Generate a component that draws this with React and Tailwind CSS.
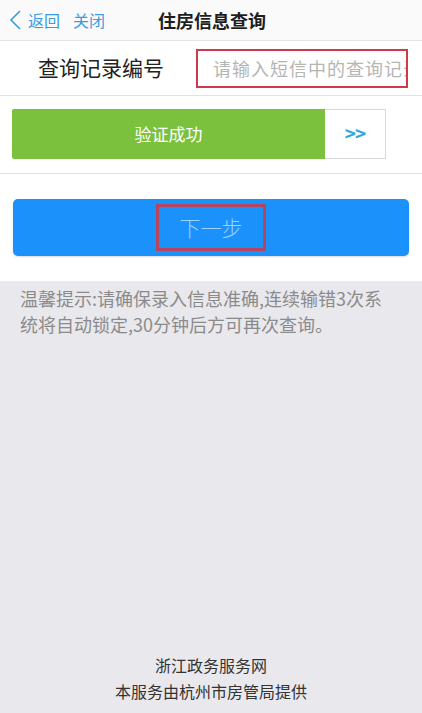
import React from 'react'

const font = { fontFamily: '"Noto Sans CJK SC", "Noto Sans", sans-serif' }

export default function App() {
  return (
    <div className="flex h-[713px] w-[422px] flex-col bg-[#e9e8ed]" style={font}>
      <div className="relative flex h-[41px] items-center border-b border-[#e4e4e4] bg-[#fafafa]">
        <div className="flex items-center pl-[9px] text-[16px] text-[#3b9be0]">
          <svg className="mr-[6px] h-[22px] w-[13px]" viewBox="0 0 13 22" fill="none" stroke="#3b9be0" strokeWidth="1.6">
            <path d="M11 2 L2 11 L11 20" />
          </svg>
          <span>返回</span>
          <span className="ml-[13px]">关闭</span>
        </div>
        <div className="absolute left-0 right-0 top-0 flex h-[40px] items-center justify-center pl-[2px] text-[18px] font-bold text-[#1e1e1e]">
          住房信息查询
        </div>
      </div>

      <div className="flex h-[55px] items-center border-b border-[#e2e2e2] bg-white">
        <div className="w-[196px] pl-[38px] text-[21px] text-[#222]">查询记录编号</div>
        <div className="flex h-[39px] w-[212px] items-center overflow-hidden whitespace-nowrap border-2 border-[#cf3a4a] pl-[15px] text-[18px] tracking-[1px] text-[#b5b5b5]">
          请输入短信中的查询记录编号
        </div>
      </div>

      <div className="flex h-[78px] items-center border-b border-[#e2e2e2] bg-white px-[12px] pb-[2px]">
        <div className="flex h-[50px] w-[313px] items-center justify-center rounded-l-[2px] bg-[#7cc13e] text-[17px] text-white">
          验证成功
        </div>
        <div className="flex h-[50px] w-[61px] items-center justify-center border border-l-0 border-[#d8d8d8] bg-white text-[19px] font-bold tracking-[-1px] text-[#33a6e0]">
          &gt;&gt;
        </div>
      </div>

      <div className="flex h-[107px] items-start bg-white px-[13px] pt-[25px]">
        <div className="flex h-[57px] w-full items-center justify-center rounded-[5px] bg-[#1a91fb] shadow-[0_1px_2px_rgba(0,0,0,0.15)]">
          <div className="flex h-[47px] w-[110px] items-center justify-center border-[3px] border-[#b5455f] text-[21px] font-light text-[#9fd3ff]">
            下一步
          </div>
        </div>
      </div>

      <div className="pl-[20px] pr-[24px] pt-[4px] text-[18px] leading-[26px] text-[#8b8b8b]">
        温馨提示:请确保录入信息准确,连续输错3次系统将自动锁定,30分钟后方可再次查询。
      </div>

      <div className="mt-auto flex flex-col items-center pb-[9px] text-[16px] leading-[26px] text-[#333]">
        <div>浙江政务服务网</div>
        <div>本服务由杭州市房管局提供</div>
      </div>
    </div>
  )
}
